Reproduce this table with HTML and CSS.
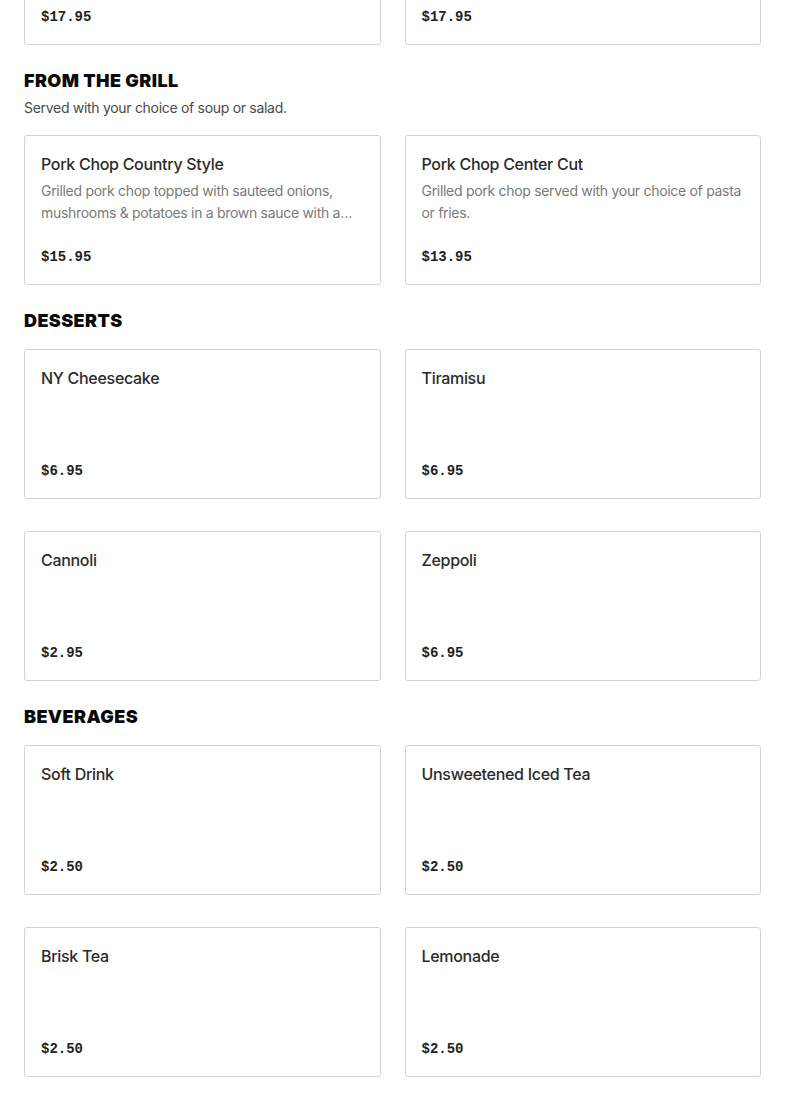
FILE: index.html
```html
<!DOCTYPE html>
<html lang="en">
<head>
<meta charset="utf-8">
<title>Menu</title>
<link rel="stylesheet" href="styles.css">
</head>
<body>
<main class="menu">
  <section class="section section-first">
    <div class="grid">
      <article class="card">
        <h3 class="card-title">Chicken Parmigiana</h3>
        <p class="card-desc">Served with your choice of pasta or salad.</p>
        <p class="card-price">$17.95</p>
      </article>
      <article class="card">
        <h3 class="card-title">Veal Parmigiana</h3>
        <p class="card-desc">Served with your choice of pasta or salad.</p>
        <p class="card-price">$17.95</p>
      </article>
    </div>
  </section>

  <section class="section">
    <header class="section-head">
      <h2 class="section-title">FROM THE GRILL</h2>
      <p class="section-sub">Served with your choice of soup or salad.</p>
    </header>
    <div class="grid">
      <article class="card">
        <h3 class="card-title">Pork Chop Country Style</h3>
        <p class="card-desc">Grilled pork chop topped with sauteed onions, mushrooms &amp; potatoes in a brown sauce with a side of pasta.</p>
        <p class="card-price">$15.95</p>
      </article>
      <article class="card">
        <h3 class="card-title">Pork Chop Center Cut</h3>
        <p class="card-desc">Grilled pork chop served with your choice of pasta or fries.</p>
        <p class="card-price">$13.95</p>
      </article>
    </div>
  </section>

  <section class="section">
    <header class="section-head">
      <h2 class="section-title">DESSERTS</h2>
    </header>
    <div class="grid">
      <article class="card">
        <h3 class="card-title">NY Cheesecake</h3>
        <p class="card-price">$6.95</p>
      </article>
      <article class="card">
        <h3 class="card-title">Tiramisu</h3>
        <p class="card-price">$6.95</p>
      </article>
      <article class="card">
        <h3 class="card-title">Cannoli</h3>
        <p class="card-price">$2.95</p>
      </article>
      <article class="card">
        <h3 class="card-title">Zeppoli</h3>
        <p class="card-price">$6.95</p>
      </article>
    </div>
  </section>

  <section class="section">
    <header class="section-head">
      <h2 class="section-title">BEVERAGES</h2>
    </header>
    <div class="grid">
      <article class="card">
        <h3 class="card-title">Soft Drink</h3>
        <p class="card-price">$2.50</p>
      </article>
      <article class="card">
        <h3 class="card-title">Unsweetened Iced Tea</h3>
        <p class="card-price">$2.50</p>
      </article>
      <article class="card">
        <h3 class="card-title">Brisk Tea</h3>
        <p class="card-price">$2.50</p>
      </article>
      <article class="card">
        <h3 class="card-title">Lemonade</h3>
        <p class="card-price">$2.50</p>
      </article>
    </div>
  </section>
</main>
</body>
</html>
```

FILE: styles.css
```css
* { box-sizing: border-box; }

html, body {
  margin: 0;
  padding: 0;
  background: #ffffff;
}

body {
  font-family: "Inter", "Liberation Sans", sans-serif;
  color: #2a2a2a;
  overflow: hidden;
}

.menu {
  margin-top: -105px;
  padding: 0 24px 24px;
}

.section-head {
  padding-top: 24px;
  margin-bottom: 16px;
}

.section-title {
  margin: 0;
  font-family: "Inter", "Liberation Sans", sans-serif;
  font-size: 18px;
  line-height: 24px;
  font-weight: 900;
  color: #0a0a0a;
  letter-spacing: 0.4px;
}

.section-sub {
  margin: 4px 0 0;
  font-size: 14px;
  line-height: 22px;
  letter-spacing: -0.3px;
  color: #4a4a4a;
}

.grid {
  display: grid;
  grid-template-columns: 1fr 1fr;
  column-gap: 24px;
  row-gap: 32px;
}

.card {
  height: 150px;
  border: 1px solid #d4d4d4;
  border-radius: 3px;
  padding: 16px 16px 15px;
  display: flex;
  flex-direction: column;
  overflow: hidden;
}

.card-title {
  margin: 0;
  font-size: 16px;
  line-height: 24px;
  font-weight: 500;
  letter-spacing: -0.3px;
  color: #2b2b2b;
}

.card-desc {
  margin: 4px 0 0;
  font-size: 14px;
  line-height: 22px;
  letter-spacing: -0.3px;
  color: #7a7a7a;
  display: -webkit-box;
  -webkit-line-clamp: 2;
  -webkit-box-orient: vertical;
  overflow: hidden;
}

.card-price {
  margin: auto 0 0;
  font-family: "Liberation Mono", "DejaVu Sans Mono", monospace;
  font-size: 14px;
  line-height: 24px;
  font-weight: 700;
  color: #222222;
}
```
